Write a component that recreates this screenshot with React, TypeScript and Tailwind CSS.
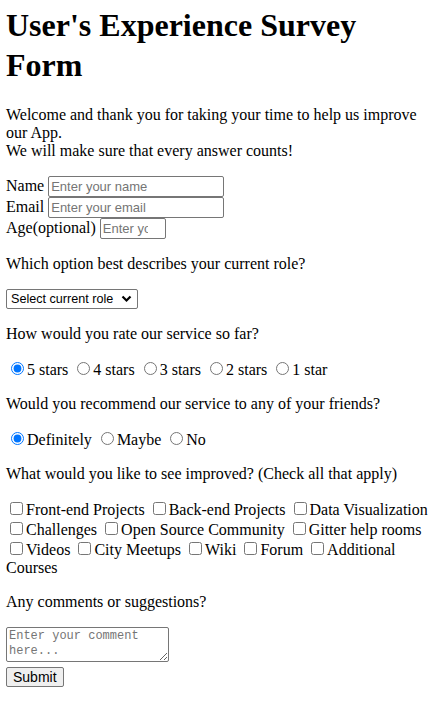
import { useState } from "react";

const roles = ["Student", "Full-time Job", "Full-time Learner", "Prefer not to say", "Other"];
const ratings = ["5 stars", "4 stars", "3 stars", "2 stars", "1 star"];
const recommend = ["Definitely", "Maybe", "No"];
const improvements = [
  "Front-end Projects",
  "Back-end Projects",
  "Data Visualization",
  "Challenges",
  "Open Source Community",
  "Gitter help rooms",
  "Videos",
  "City Meetups",
  "Wiki",
  "Forum",
  "Additional Courses",
];

const fieldClass =
  "h-[21px] border border-[#767676] rounded-[2px] px-[2px] py-[1px] font-['Liberation_Sans',Arial,sans-serif] text-[13px] leading-[normal] placeholder:text-[#757575] align-baseline";

export default function App() {
  const [rating, setRating] = useState("5 stars");
  const [rec, setRec] = useState("Definitely");
  const [checked, setChecked] = useState<string[]>([]);

  const toggle = (item: string) =>
    setChecked((prev) => (prev.includes(item) ? prev.filter((i) => i !== item) : [...prev, item]));

  return (
    <div className="bg-white text-black font-['Liberation_Serif','Times_New_Roman',serif] text-[16px] leading-[normal] pl-[6px] pr-2 pt-[5px] pb-8">
      <h1 className="text-[32px] font-bold leading-[40px] mb-[21px]">User's Experience Survey Form</h1>
      <p className="mb-4">
        Welcome and thank you for taking your time to help us improve our App.
        <br />
        We will make sure that every answer counts!
      </p>

      <form onSubmit={(e) => e.preventDefault()}>
        <div>
          <label htmlFor="name">Name </label>
          <input id="name" type="text" placeholder="Enter your name" className={`${fieldClass} w-[176px]`} />
        </div>
        <div>
          <label htmlFor="email">Email </label>
          <input id="email" type="email" placeholder="Enter your email" className={`${fieldClass} w-[176px]`} />
        </div>
        <div>
          <label htmlFor="age">Age(optional) </label>
          <input id="age" type="number" placeholder="Enter your age" className={`${fieldClass} w-[66px]`} />
        </div>

        <p className="my-4">Which option best describes your current role?</p>
        <span className="inline-flex items-center h-[20px] w-[132px] border border-[#767676] rounded-[2px] bg-white">
          <select
            defaultValue=""
            className="appearance-none h-full w-full pl-[4px] pr-[16px] font-['Liberation_Sans',Arial,sans-serif] text-[12.6px] leading-[normal] bg-transparent outline-none"
          >
            <option value="" disabled>
              Select current role
            </option>
            {roles.map((r) => (
              <option key={r}>{r}</option>
            ))}
          </select>
          <svg
            viewBox="0 0 11 8"
            className="w-[11px] h-[8px] -ml-[16px] mr-[5px] shrink-0 pointer-events-none"
            fill="none"
            stroke="#000"
            strokeWidth="2.2"
          >
            <path d="M1.5 1.5l4 4 4-4" />
          </svg>
        </span>

        <p className="my-4">How would you rate our service so far?</p>
        <p className="my-4">
          {ratings.map((r) => (
            <label key={r}>
              <input
                type="radio"
                name="rating"
                checked={rating === r}
                onChange={() => setRating(r)}
                className="ml-[5px] mr-[3px] mt-[3px] align-baseline"
              />
              {r}{" "}
            </label>
          ))}
        </p>

        <p className="my-4">Would you recommend our service to any of your friends?</p>
        <p className="my-4">
          {recommend.map((r) => (
            <label key={r}>
              <input
                type="radio"
                name="recommend"
                checked={rec === r}
                onChange={() => setRec(r)}
                className="ml-[5px] mr-[3px] mt-[3px] align-baseline"
              />
              {r}{" "}
            </label>
          ))}
        </p>

        <p className="my-4">What would you like to see improved? (Check all that apply)</p>
        <p className="my-4">
          {improvements.map((item) => (
            <label key={item}>
              <input
                type="checkbox"
                checked={checked.includes(item)}
                onChange={() => toggle(item)}
                className="ml-[4px] mr-[3px] my-[3px] align-baseline"
              />
              {item}{" "}
            </label>
          ))}
        </p>

        <p className="my-4">Any comments or suggestions?</p>
        <textarea
          placeholder="Enter your comment here..."
          className="block w-[163px] h-[35px] border border-[#767676] rounded-[2px] px-[2px] py-[1px] font-['Liberation_Mono',monospace] text-[12px] leading-[15px] placeholder:text-[#757575]"
        />
        <button
          type="submit"
          className="mt-[5px] h-[20px] bg-[#efefef] border border-[#767676] rounded-[2px] px-[6px] font-['Liberation_Sans',Arial,sans-serif] text-[14px] leading-[normal]"
        >
          Submit
        </button>
      </form>
    </div>
  );
}
